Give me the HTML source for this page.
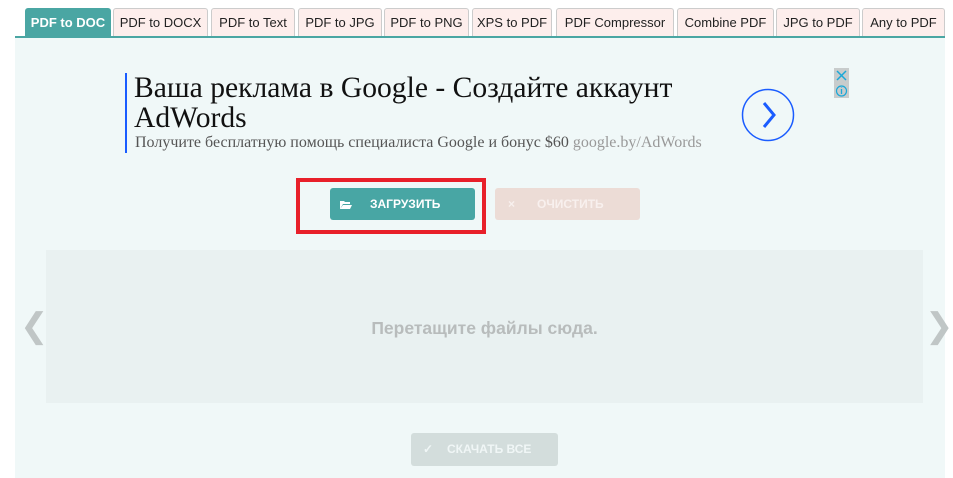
<!DOCTYPE html>
<html><head><meta charset="utf-8"><style>
*{margin:0;padding:0;box-sizing:border-box}
body{width:953px;height:478px;background:#fff;position:relative;overflow:hidden;font-family:"Liberation Sans",Arial,sans-serif}
.tab{position:absolute;top:8px;height:28px;background:#fdeeec;border:1px solid #ccc;border-bottom:none;border-radius:3px 3px 0 0;font-size:13px;color:#222;text-align:center;line-height:27px;white-space:nowrap}
.tab.a{background:#4aa6a3;border-color:#4aa6a3;color:#fff;font-weight:bold}
.line{position:absolute;left:15px;top:36px;width:930px;height:2px;background:#4aa6a3}
.content{position:absolute;left:15px;top:38px;width:930px;height:440px;background:#f0f8f8}
.abs{position:absolute}
</style></head><body>
<div class="tab a" style="left:25px;width:86px">PDF to DOC</div>
<div class="tab" style="left:113px;width:95px">PDF to DOCX</div>
<div class="tab" style="left:211px;width:84px">PDF to Text</div>
<div class="tab" style="left:298px;width:84px">PDF to JPG</div>
<div class="tab" style="left:384px;width:85px">PDF to PNG</div>
<div class="tab" style="left:472px;width:80px">XPS to PDF</div>
<div class="tab" style="left:556px;width:118px">PDF Compressor</div>
<div class="tab" style="left:677px;width:97px">Combine PDF</div>
<div class="tab" style="left:776px;width:84px">JPG to PDF</div>
<div class="tab" style="left:862px;width:83px">Any to PDF</div>
<div class="line"></div>
<div class="content"></div>

<div class="abs" style="left:125px;top:73px;width:2px;height:80px;background:#1a5cff"></div>
<div class="abs" style="left:134px;top:73px;font-family:'Liberation Serif',serif;font-size:29.6px;line-height:30px;color:#111;width:600px;white-space:nowrap">Ваша реклама в Google - Создайте аккаунт<br>AdWords</div>
<div class="abs" style="left:135px;top:134px;font-family:'Liberation Serif',serif;font-size:16px;color:#555;white-space:nowrap">Получите бесплатную помощь специалиста Google и бонус $60 <span style="color:#999">google.by/AdWords</span></div>
<svg class="abs" style="left:741px;top:88px" width="54" height="54"><circle cx="27" cy="27" r="25.5" fill="none" stroke="#1a5cff" stroke-width="1.5"/><path d="M23 15 L33 27 L23 39" fill="none" stroke="#1a5cff" stroke-width="3"/></svg>
<div class="abs" style="left:834px;top:68px;width:15px;height:30px;background:#c8cccc"></div>
<svg class="abs" style="left:834px;top:68px" width="15" height="30"><path d="M3 3L12 12M12 3L3 12" stroke="#1aa8d8" stroke-width="1.5"/><circle cx="7.5" cy="23" r="5" fill="none" stroke="#1aa8d8" stroke-width="1.2"/><path d="M7.5 21v5M7.5 19.5v.5" stroke="#1aa8d8" stroke-width="1.3"/></svg>

<div class="abs" style="left:296px;top:178px;width:190px;height:56px;border:4px solid #e8202a"></div>
<div class="abs" style="left:330px;top:188px;width:145px;height:32px;background:#48a6a4;border-radius:3px;color:#fff;font-weight:bold;font-size:12px;line-height:32px"><svg style="position:absolute;left:10px;top:12px" width="12" height="9"><path d="M0 1h4l1 1h5v2H3L0 9z M3 5h9l-2 4H0z" fill="#fff"/></svg><span style="position:absolute;left:40px">ЗАГРУЗИТЬ</span></div>
<div class="abs" style="left:495px;top:188px;width:145px;height:32px;background:#ecdcd6;border-radius:3px;color:#f8f0ee;font-weight:bold;font-size:12px;line-height:32px"><span style="position:absolute;left:13px">×</span><span style="position:absolute;left:42px">ОЧИСТИТЬ</span></div>

<div class="abs" style="left:46px;top:250px;width:877px;height:153px;background:#e9f1f1"></div>
<div class="abs" style="left:46px;top:318px;width:877px;text-align:center;font-weight:bold;font-size:17.5px;color:#b8bcbc">Перетащите файлы сюда.</div>
<div class="abs" style="left:20px;top:306px;font-size:34px;color:#c0c6c6">&#10094;</div>
<div class="abs" style="left:925px;top:306px;font-size:34px;color:#c0c6c6">&#10095;</div>

<div class="abs" style="left:411px;top:433px;width:147px;height:33px;background:#d3dddc;border-radius:3px;color:#f0f6f6;font-weight:bold;font-size:12px;line-height:33px"><span style="position:absolute;left:12px">✓</span><span style="position:absolute;left:36px">СКАЧАТЬ ВСЕ</span></div>
</body></html>
